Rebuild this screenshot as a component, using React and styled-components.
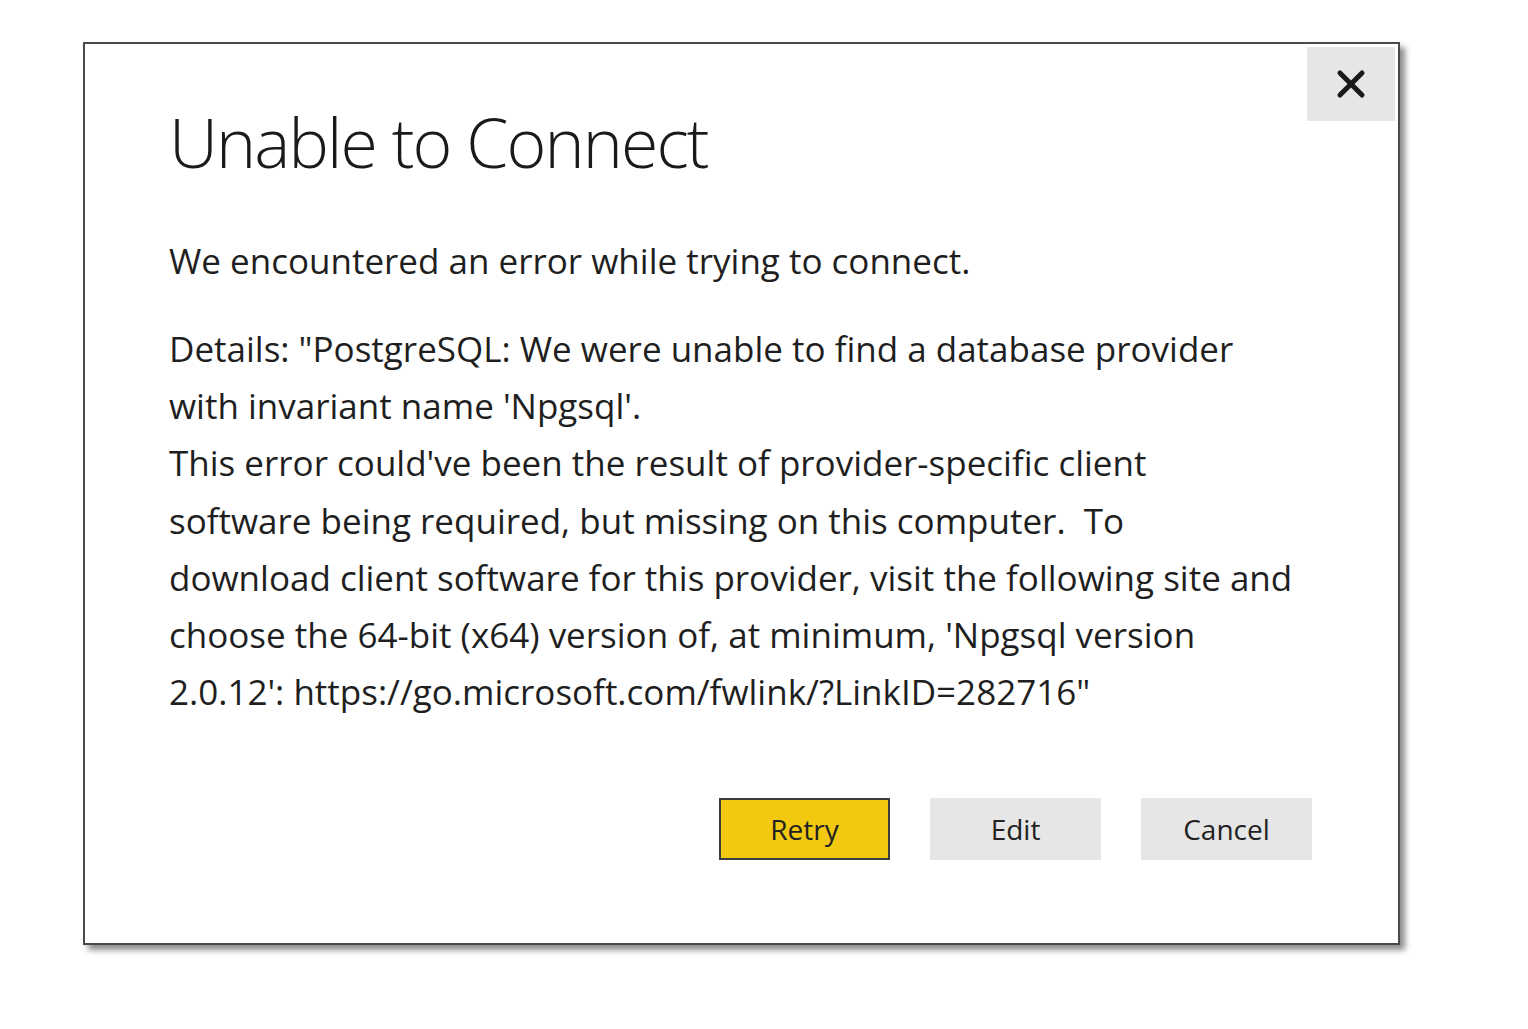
import React from 'react';
import styled, { createGlobalStyle } from 'styled-components';

const GlobalStyle = createGlobalStyle`
  html, body {
    margin: 0;
    padding: 0;
    background: #ffffff;
  }
  body {
    font-family: "Open Sans", "Noto Sans", sans-serif;
    color: #1f1f1f;
  }
`;

const Page = styled.div`
  width: 1528px;
  height: 1029px;
  padding: 42px 0 0 83px;
  box-sizing: border-box;
`;

const Dialog = styled.div`
  position: relative;
  width: 1317px;
  height: 903px;
  box-sizing: border-box;
  border: 2px solid #4a4a4a;
  background: #ffffff;
  box-shadow: 5px 5px 6px rgba(0, 0, 0, 0.45);
  padding: 53px 84px 0 84px;
  display: flex;
  flex-direction: column;
`;

const CloseButton = styled.button`
  position: absolute;
  top: 3px;
  right: 3px;
  width: 88px;
  height: 74px;
  border: none;
  background: #e6e6e6;
  display: flex;
  align-items: center;
  justify-content: center;
  padding: 0;
`;

const Title = styled.h1`
  margin: 0;
  font-family: "Open Sans", sans-serif;
  font-weight: 300;
  font-size: 68px;
  line-height: 90px;
  color: #1a1a1a;
  letter-spacing: -1.9px;
`;

const Lead = styled.p`
  margin: 45px 0 0 0;
  font-size: 35px;
  line-height: 57px;
`;

const Details = styled.div`
  margin-top: 31px;
  font-size: 35px;
  line-height: 57.2px;
`;

const Line = styled.div`
  white-space: pre;
`;

const Actions = styled.div`
  margin-top: 78px;
  display: flex;
  justify-content: flex-end;
  gap: 40px;
  padding-right: 2px;
`;

const Button = styled.button`
  width: 171px;
  height: 62px;
  box-sizing: border-box;
  font-family: "Open Sans", sans-serif;
  font-size: 28px;
  color: #222;
  border: ${p => (p.$primary ? '2px solid #3c3c3c' : 'none')};
  background: ${p => (p.$primary ? '#f2c811' : '#e6e6e6')};
  padding: 0;
`;

const detailLines = [
  'Details: "PostgreSQL: We were unable to find a database provider',
  "with invariant name 'Npgsql'.",
  "This error could've been the result of provider-specific client",
  'software being required, but missing on this computer.  To',
  'download client software for this provider, visit the following site and',
  "choose the 64-bit (x64) version of, at minimum, 'Npgsql version",
  "2.0.12': https://go.microsoft.com/fwlink/?LinkID=282716\"",
];

export default function App() {
  return (
    <>
      <GlobalStyle />
      <Page>
        <Dialog>
          <CloseButton aria-label="Close">
            <svg width="30" height="30" viewBox="0 0 30 30">
              <path d="M4 4 L26 26 M26 4 L4 26" stroke="#1a1a1a" strokeWidth="5" strokeLinecap="round" />
            </svg>
          </CloseButton>
          <Title>Unable to Connect</Title>
          <Lead>We encountered an error while trying to connect.</Lead>
          <Details>
            {detailLines.map((l, i) => (
              <Line key={i}>{l}</Line>
            ))}
          </Details>
          <Actions>
            <Button $primary>Retry</Button>
            <Button>Edit</Button>
            <Button>Cancel</Button>
          </Actions>
        </Dialog>
      </Page>
    </>
  );
}
